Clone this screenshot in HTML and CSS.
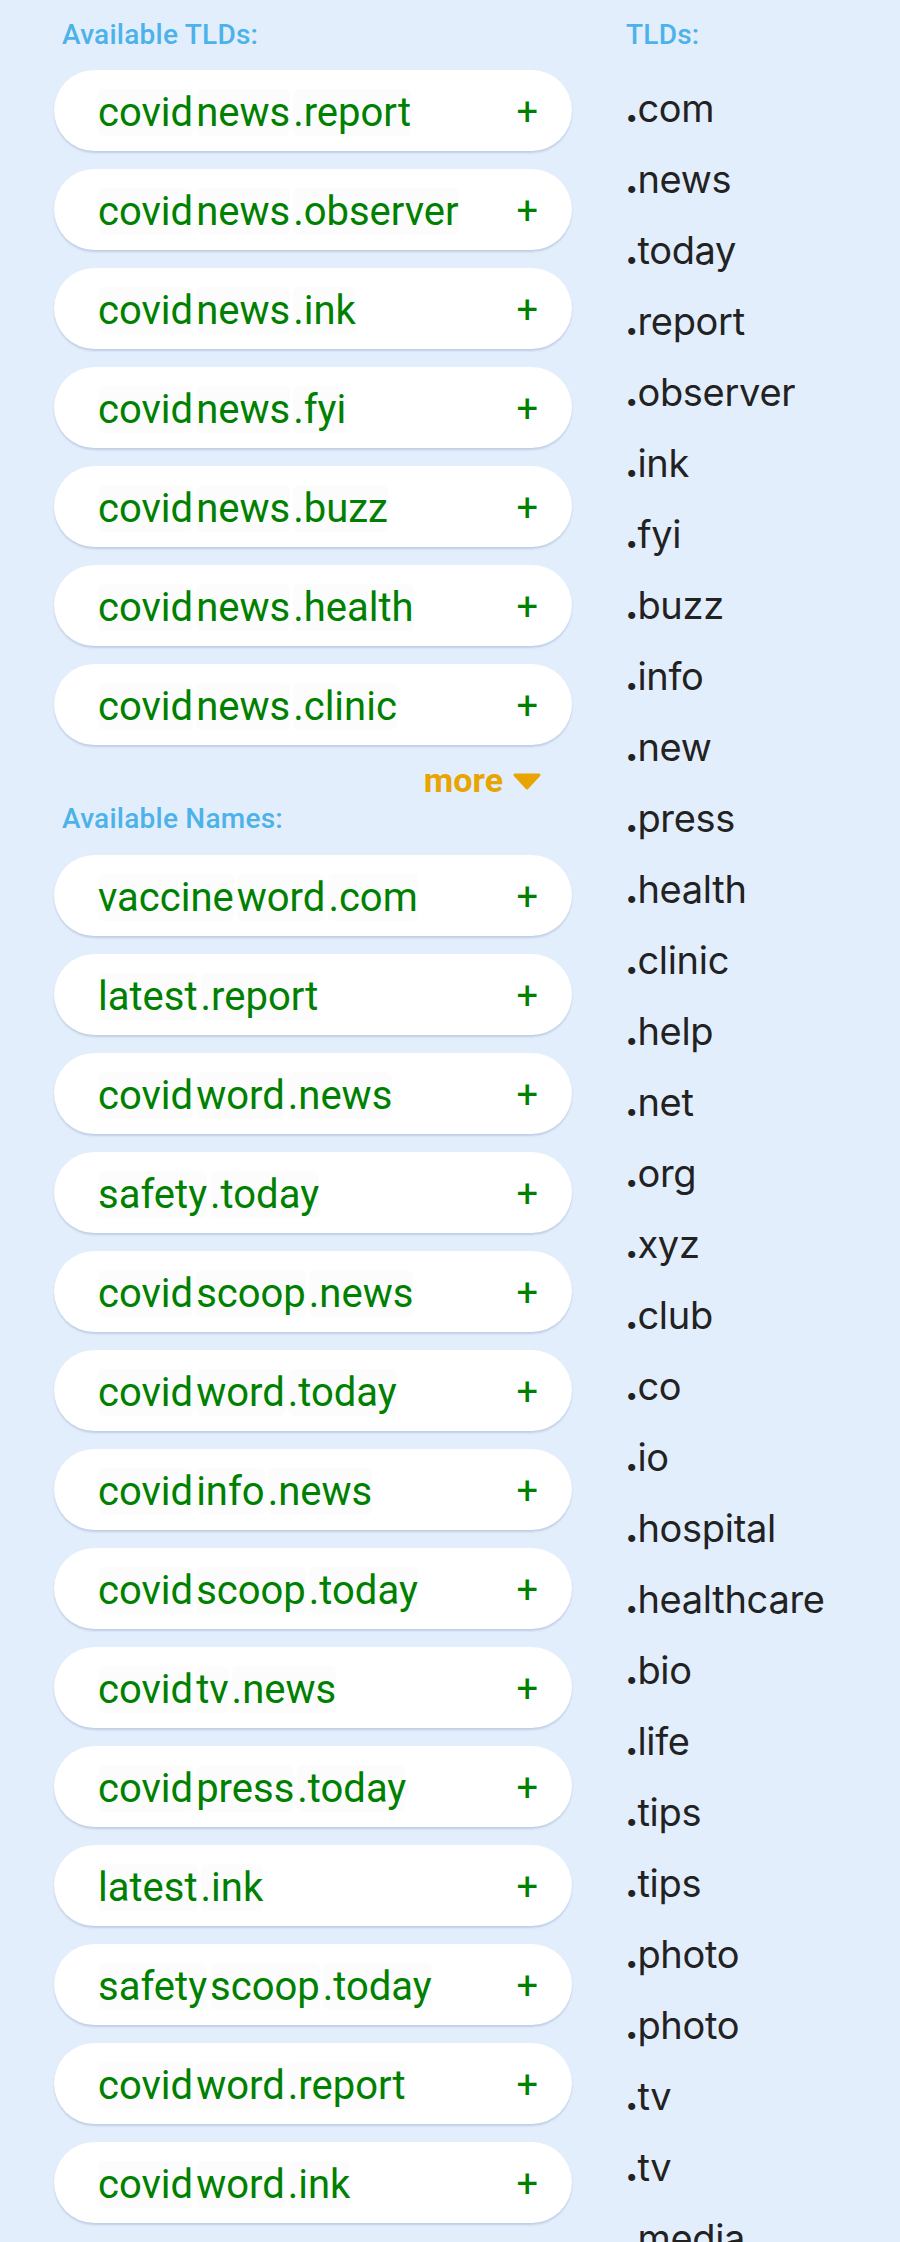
FILE: index.html
```html
<!DOCTYPE html>
<html lang="en">
<head>
<meta charset="utf-8">
<title>Domains</title>
<link rel="stylesheet" href="styles.css">
</head>
<body>
<div class="page">
  <div class="left">
    <div class="label">Available TLDs:</div>
    <div class="chips tld-chips">
      <div class="chip"><span class="name"><span class="seg">covid</span><span class="seg">news</span><span class="seg">.report</span></span><span class="plus">+</span></div>
      <div class="chip"><span class="name"><span class="seg">covid</span><span class="seg">news</span><span class="seg">.observer</span></span><span class="plus">+</span></div>
      <div class="chip"><span class="name"><span class="seg">covid</span><span class="seg">news</span><span class="seg">.ink</span></span><span class="plus">+</span></div>
      <div class="chip"><span class="name"><span class="seg">covid</span><span class="seg">news</span><span class="seg">.fyi</span></span><span class="plus">+</span></div>
      <div class="chip"><span class="name"><span class="seg">covid</span><span class="seg">news</span><span class="seg">.buzz</span></span><span class="plus">+</span></div>
      <div class="chip"><span class="name"><span class="seg">covid</span><span class="seg">news</span><span class="seg">.health</span></span><span class="plus">+</span></div>
      <div class="chip"><span class="name"><span class="seg">covid</span><span class="seg">news</span><span class="seg">.clinic</span></span><span class="plus">+</span></div>
    </div>
    <div class="more-row">
      <span class="more">more</span>
      <svg class="caret" width="28" height="17" viewBox="0 0 28 17"><polygon points="2,2 26,2 14,15" fill="#e8a400" stroke="#e8a400" stroke-width="3" stroke-linejoin="round"/></svg>
    </div>
    <div class="label names-label">Available Names:</div>
    <div class="chips name-chips">
      <div class="chip"><span class="name"><span class="seg">vaccine</span><span class="seg">word</span><span class="seg">.com</span></span><span class="plus">+</span></div>
      <div class="chip"><span class="name"><span class="seg">latest</span><span class="seg">.report</span></span><span class="plus">+</span></div>
      <div class="chip"><span class="name"><span class="seg">covid</span><span class="seg">word</span><span class="seg">.news</span></span><span class="plus">+</span></div>
      <div class="chip"><span class="name"><span class="seg">safety</span><span class="seg">.today</span></span><span class="plus">+</span></div>
      <div class="chip"><span class="name"><span class="seg">covid</span><span class="seg">scoop</span><span class="seg">.news</span></span><span class="plus">+</span></div>
      <div class="chip"><span class="name"><span class="seg">covid</span><span class="seg">word</span><span class="seg">.today</span></span><span class="plus">+</span></div>
      <div class="chip"><span class="name"><span class="seg">covid</span><span class="seg">info</span><span class="seg">.news</span></span><span class="plus">+</span></div>
      <div class="chip"><span class="name"><span class="seg">covid</span><span class="seg">scoop</span><span class="seg">.today</span></span><span class="plus">+</span></div>
      <div class="chip"><span class="name"><span class="seg">covid</span><span class="seg">tv</span><span class="seg">.news</span></span><span class="plus">+</span></div>
      <div class="chip"><span class="name"><span class="seg">covid</span><span class="seg">press</span><span class="seg">.today</span></span><span class="plus">+</span></div>
      <div class="chip"><span class="name"><span class="seg">latest</span><span class="seg">.ink</span></span><span class="plus">+</span></div>
      <div class="chip"><span class="name"><span class="seg">safety</span><span class="seg">scoop</span><span class="seg">.today</span></span><span class="plus">+</span></div>
      <div class="chip"><span class="name"><span class="seg">covid</span><span class="seg">word</span><span class="seg">.report</span></span><span class="plus">+</span></div>
      <div class="chip"><span class="name"><span class="seg">covid</span><span class="seg">word</span><span class="seg">.ink</span></span><span class="plus">+</span></div>
    </div>
  </div>
  <div class="right">
    <div class="label">TLDs:</div>
    <ul class="tld-list">
      <li><b>.</b>com</li><li><b>.</b>news</li><li><b>.</b>today</li><li><b>.</b>report</li><li><b>.</b>observer</li>
      <li><b>.</b>ink</li><li><b>.</b>fyi</li><li><b>.</b>buzz</li><li><b>.</b>info</li><li><b>.</b>new</li>
      <li><b>.</b>press</li><li><b>.</b>health</li><li><b>.</b>clinic</li><li><b>.</b>help</li><li><b>.</b>net</li>
      <li><b>.</b>org</li><li><b>.</b>xyz</li><li><b>.</b>club</li><li><b>.</b>co</li><li><b>.</b>io</li>
      <li><b>.</b>hospital</li><li><b>.</b>healthcare</li><li><b>.</b>bio</li><li><b>.</b>life</li><li><b>.</b>tips</li>
      <li><b>.</b>tips</li><li><b>.</b>photo</li><li><b>.</b>photo</li><li><b>.</b>tv</li><li><b>.</b>tv</li>
      <li><b>.</b>media</li>
    </ul>
  </div>
</div>
</body>
</html>
```

FILE: styles.css
```css
html, body {
  margin: 0;
  padding: 0;
  background: #e3eefd;
}

.page {
  display: flex;
  flex-direction: row;
  align-items: flex-start;
  padding-top: 19px;
}

.left {
  width: 518px;
  margin-left: 54px;
  display: flex;
  flex-direction: column;
}

.label {
  font-family: Roboto, "Liberation Sans", sans-serif;
  font-weight: 500;
  font-size: 28px;
  line-height: 32px;
  height: 32px;
  color: #4cb2ea;
  padding-left: 8px;
  letter-spacing: 0.25px;
}

.chips {
  display: flex;
  flex-direction: column;
  gap: 18px;
}

.tld-chips {
  margin-top: 19px;
}

.name-chips {
  margin-top: 20px;
}

.chip {
  height: 81px;
  box-sizing: border-box;
  background: #ffffff;
  border-radius: 41px;
  box-shadow: 0 2px 2px rgba(70, 100, 140, 0.22);
  display: flex;
  align-items: center;
  justify-content: space-between;
  padding: 3px 34px 0 44px;
  font-family: Roboto, "Liberation Sans", sans-serif;
  font-size: 40px;
  color: #008000;
}

.name {
  display: flex;
  align-items: center;
}

.seg {
  display: inline-block;
  background: #fcfcfc;
  border-radius: 6px;
  margin-right: 3px;
}

.plus {
  display: inline-block;
  font-size: 38px;
}

.more-row {
  margin-top: 15px;
  height: 40px;
  display: flex;
  justify-content: flex-end;
  align-items: center;
  padding-right: 31px;
  gap: 10px;
}

.more {
  font-family: Roboto, "Liberation Sans", sans-serif;
  font-weight: 700;
  font-size: 34px;
  line-height: 40px;
  color: #e8a400;
}

.caret {
  display: block;
  margin-top: 3px;
}

.names-label {
  margin-top: 3px;
}

.right {
  margin-left: 53px;
  display: flex;
  flex-direction: column;
}

.right .label {
  padding-left: 1px;
}

.tld-list {
  list-style: none;
  margin: 22px 0 0 0;
  padding: 0;
  font-family: Inter, "Liberation Sans", sans-serif;
  font-size: 38px;
  line-height: 71px;
  color: #222222;
}

.tld-list li {
  height: 71px;
  letter-spacing: -0.3px;
}

.tld-list b {
  font-weight: 800;
  letter-spacing: -1px;
}
```
